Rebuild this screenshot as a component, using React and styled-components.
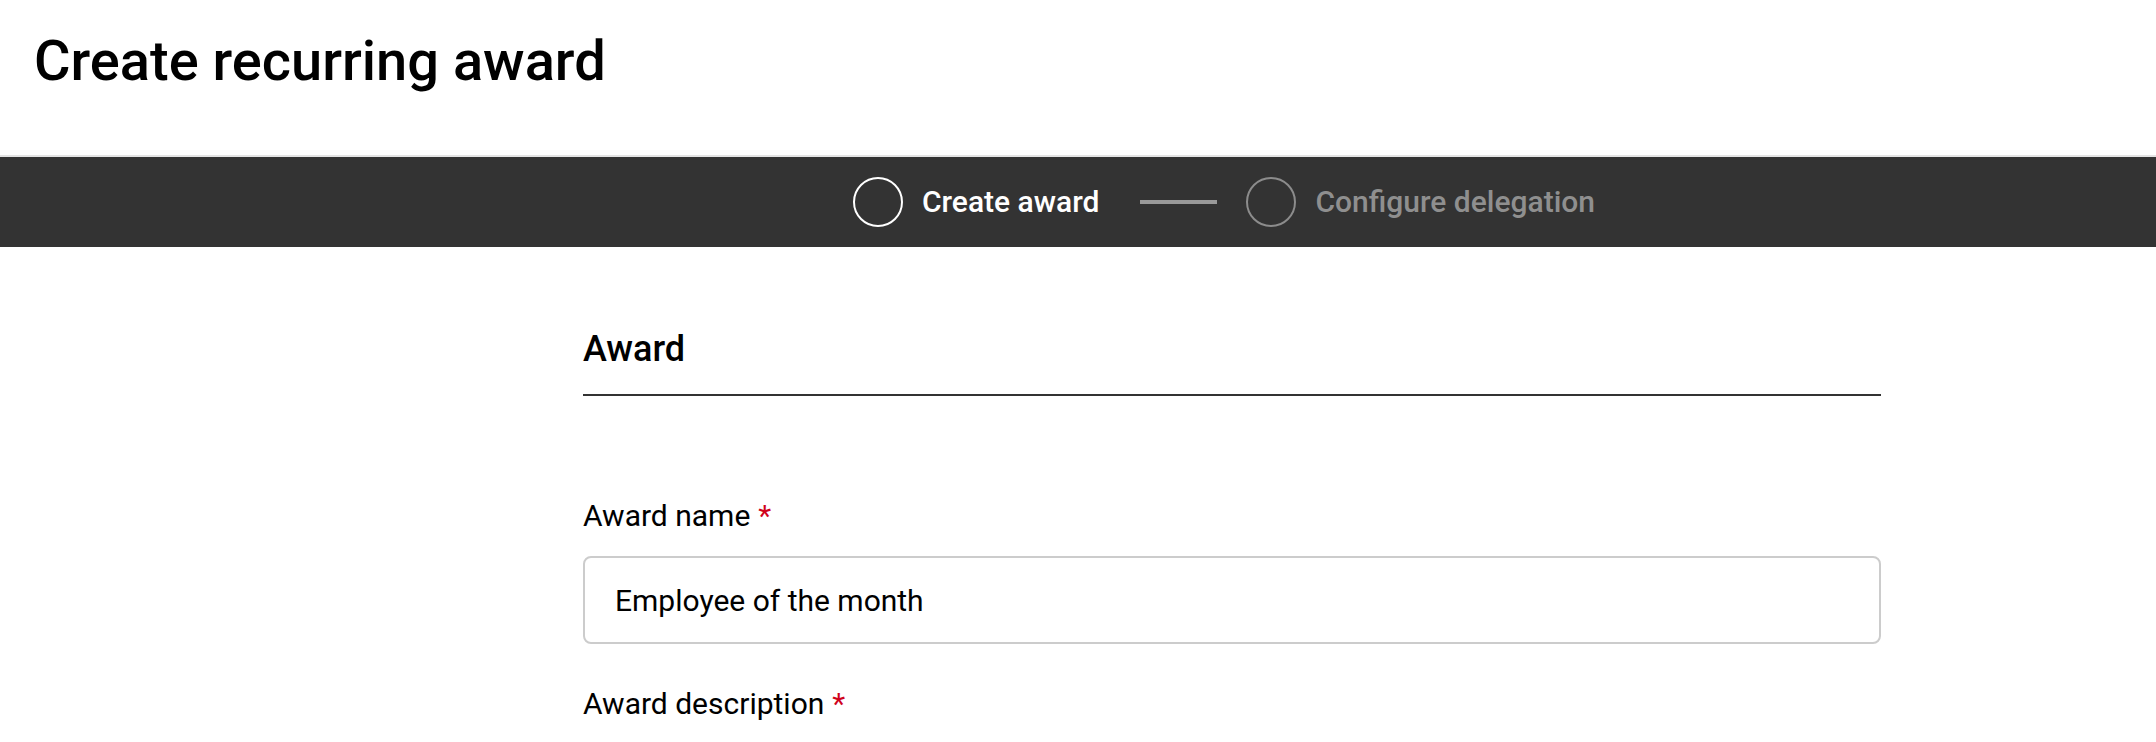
import React from "react";
import styled, { createGlobalStyle } from "styled-components";

const GlobalStyle = createGlobalStyle`
  html, body {
    margin: 0;
    padding: 0;
    background: #ffffff;
    font-family: Roboto, "Liberation Sans", Arial, sans-serif;
    color: #000000;
  }
  * {
    box-sizing: border-box;
  }
`;

const Page = styled.div`
  width: 100%;
  min-height: 742px;
  background: #ffffff;
`;

const Header = styled.header`
  padding: 29px 34px 62px;
`;

const Title = styled.h1`
  margin: 0;
  font-size: 56px;
  line-height: 64px;
  font-weight: 500;
  color: #000000;
`;

const StepBar = styled.nav`
  display: flex;
  justify-content: center;
  align-items: center;
  height: 92px;
  padding-left: 292px;
  background: #333333;
  border-top: 2px solid #e4e4e4;
`;

const Step = styled.div`
  display: flex;
  align-items: center;
  gap: 19px;
`;

const StepCircle = styled.span`
  display: block;
  width: 50px;
  height: 50px;
  border-radius: 50%;
  border: 2px solid ${(p) => (p.$active ? "#ffffff" : "#8c8c8c")};
`;

const StepLabel = styled.span`
  font-size: 30px;
  line-height: 36px;
  font-weight: 500;
  color: ${(p) => (p.$active ? "#ffffff" : "#8f8f8f")};
`;

const Connector = styled.span`
  display: block;
  width: 77px;
  height: 4px;
  margin: 0 29px 0 41px;
  background: #999999;
`;

const Main = styled.main`
  padding: 82px 275px 0 583px;
`;

const SectionTitle = styled.h2`
  margin: 0;
  padding-bottom: 25px;
  font-size: 36px;
  line-height: 40px;
  font-weight: 500;
  color: #000000;
  border-bottom: 2px solid #333333;
`;

const Form = styled.form`
  display: flex;
  flex-direction: column;
  padding-top: 100px;
`;

const Field = styled.div`
  display: flex;
  flex-direction: column;
  gap: 20px;
  margin-bottom: 40px;
`;

const Label = styled.label`
  font-size: 30px;
  line-height: 40px;
  font-weight: 400;
  color: #000000;
`;

const Required = styled.span`
  color: #d0021b;
  margin-left: 8px;
`;

const TextInput = styled.input`
  width: 100%;
  height: 88px;
  padding: 0 30px;
  font-family: Roboto, "Liberation Sans", Arial, sans-serif;
  font-size: 30px;
  color: #000000;
  background: #ffffff;
  border: 2px solid #cccccc;
  border-radius: 8px;
  outline: none;
`;

const steps = [
  { label: "Create award", active: true },
  { label: "Configure delegation", active: false },
];

export default function App() {
  return (
    <Page>
      <GlobalStyle />
      <Header>
        <Title>Create recurring award</Title>
      </Header>
      <StepBar>
        {steps.map((s, i) => (
          <React.Fragment key={s.label}>
            {i > 0 && <Connector />}
            <Step>
              <StepCircle $active={s.active} />
              <StepLabel $active={s.active}>{s.label}</StepLabel>
            </Step>
          </React.Fragment>
        ))}
      </StepBar>
      <Main>
        <SectionTitle>Award</SectionTitle>
        <Form onSubmit={(e) => e.preventDefault()}>
          <Field>
            <Label htmlFor="award-name">
              Award name<Required>*</Required>
            </Label>
            <TextInput id="award-name" defaultValue="Employee of the month" />
          </Field>
          <Field>
            <Label htmlFor="award-description">
              Award description<Required>*</Required>
            </Label>
          </Field>
        </Form>
      </Main>
    </Page>
  );
}
